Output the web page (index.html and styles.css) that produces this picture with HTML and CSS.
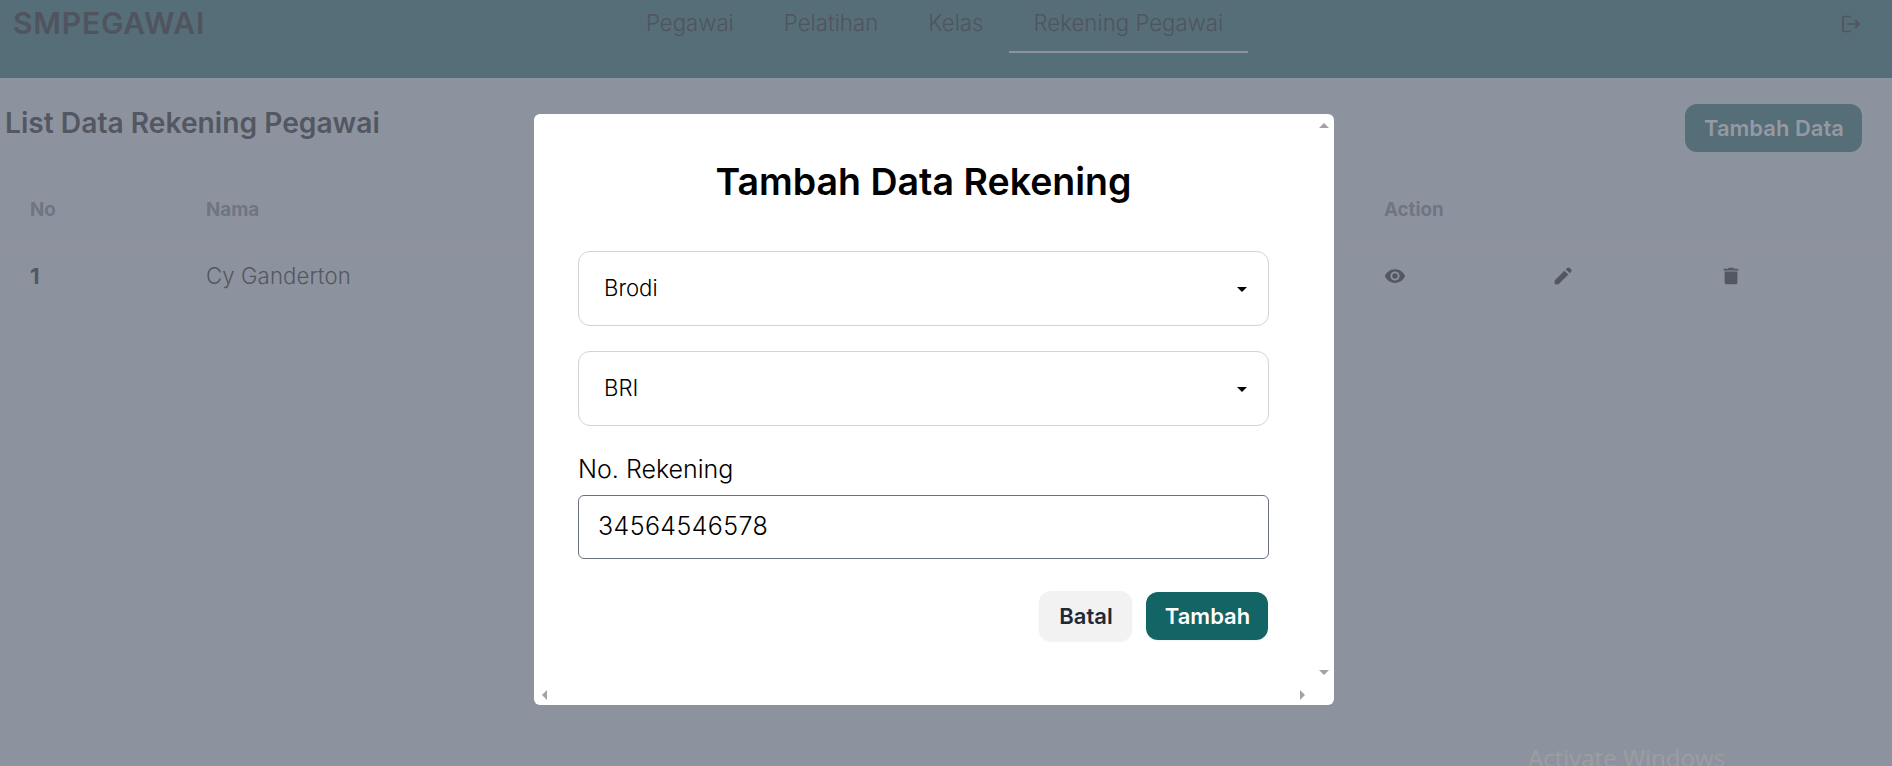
FILE: index.html
```html
<!DOCTYPE html>
<html lang="id">
<head>
<meta charset="utf-8">
<title>SMPEGAWAI</title>
<link rel="stylesheet" href="styles.css">
</head>
<body>
<header class="navbar">
  <div class="brand">SMPEGAWAI</div>
  <nav class="menu">
    <a class="menu-item">Pegawai</a>
    <a class="menu-item">Pelatihan</a>
    <a class="menu-item">Kelas</a>
    <a class="menu-item active">Rekening Pegawai</a>
  </nav>
  <svg class="icon logout" viewBox="0 0 22 22" fill="none" stroke="currentColor" stroke-width="1.7"><path d="M11 3.500H4.200Q3 3.500 3 4.700V17.300Q3 18.500 4.200 18.500H11M7.500 11H19M15 6.800L19.200 11L15 15.200"/></svg>
</header>
<main class="page">
  <div class="page-head">
    <h1 class="page-title">List Data Rekening Pegawai</h1>
    <button class="btn btn-muted">Tambah Data</button>
  </div>
  <div class="table">
    <div class="row row-head"><span>No</span><span>Nama</span><span>Action</span></div>
    <div class="row row-body">
      <span class="num">1</span><span class="name">Cy Ganderton</span>
      <span class="actions">
        <svg class="icon" viewBox="0 0 24 24" fill="currentColor"><path d="M12 9a3 3 0 0 0-3 3 3 3 0 0 0 3 3 3 3 0 0 0 3-3 3 3 0 0 0-3-3m0 8a5 5 0 0 1-5-5 5 5 0 0 1 5-5 5 5 0 0 1 5 5 5 5 0 0 1-5 5m0-12.500C7 4.500 2.730 7.610 1 12c1.730 4.390 6 7.500 11 7.500s9.270-3.110 11-7.500c-1.730-4.390-6-7.500-11-7.500Z"/></svg>
        <svg class="icon" viewBox="0 0 24 24" fill="currentColor"><path d="m19.300 8.925-4.250-4.200 1.400-1.400q.575-.575 1.413-.575.837 0 1.412.575l1.400 1.400q.575.575.6 1.388.025.812-.55 1.387ZM17.850 10.400 7.250 21H3v-4.250l10.600-10.600Z"/></svg>
        <svg class="icon" viewBox="0 0 24 24" fill="currentColor"><path d="M7 21q-.825 0-1.412-.587Q5 19.825 5 19V7h14v12q0 .825-.587 1.413Q17.825 21 17 21ZM4 6V4h5V3h6v1h5v2Z"/></svg>
      </span>
    </div>
  </div>
</main>
<div class="watermark">Activate Windows</div>
<section class="modal">
  <div class="modal-content">
    <h2 class="modal-title">Tambah Data Rekening</h2>
    <div class="select">Brodi<span class="caret"></span></div>
    <div class="select">BRI<span class="caret"></span></div>
    <label class="label" for="rek">No. Rekening</label>
    <input class="input" id="rek" value="34564546578">
    <div class="buttons">
      <button class="btn btn-light">Batal</button>
      <button class="btn btn-primary">Tambah</button>
    </div>
  </div>
  <div class="scroll-y"><i class="arrow up"></i><i class="arrow down"></i></div>
  <div class="scroll-x"><i class="arrow left"></i><i class="arrow right"></i></div>
</section>
</body>
</html>
```
FILE: styles.css
```css
* { box-sizing: border-box; }
body {
  margin: 0;
  height: 766px;
  overflow: hidden;
  position: relative;
  background: #8d939e;
  color: #525761;
  font-family: Inter, "Liberation Sans", sans-serif;
  font-size: 22.15px;
}
h1, h2 { margin: 0; }
.icon { display: block; width: 22px; height: 22px; }

.navbar {
  height: 78px;
  background: #566e78;
  display: grid;
  grid-template-columns: 621px 1fr auto;
  align-items: start;
  padding: 0 30px 0 0;
  color: #50545f;
}
.brand { font-size: 30px; font-weight: 600; line-height: 36px; letter-spacing: 0.8px; padding: 5px 0 0 13px; }
.menu { display: flex; }
.menu-item { padding: 7px 25px 0; height: 53px; line-height: 32px; font-weight: 300; letter-spacing: 0.05px; }
.menu-item.active { border-bottom: 2px solid #8d939e; }
.logout { margin-top: 13px; }

.page-head {
  display: flex;
  justify-content: space-between;
  padding: 26px 30px 0 5px;
}
.page-title { font-size: 28.2px; font-weight: 600; line-height: 39px; }

.btn {
  height: 48px;
  border: 0;
  border-radius: 12px;
  padding: 0 0 1px 1px;
  font-family: inherit;
  font-size: 22px;
  font-weight: 600;
}
.btn-muted { width: 177px; background: #566e78; color: #9499a4; }

.row {
  display: grid;
  grid-template-columns: 176px 1178px 1fr;
  align-items: center;
  padding: 0 30px;
}
.row-head {
  margin-top: 24px;
  height: 67px;
  border-bottom: 1px solid #8e919d;
  font-size: 18.75px;
  font-weight: 700;
  color: #6f7583;
}
.row-body { height: 66px; font-weight: 300; }
.name { letter-spacing: 0.12px; }
.num { font-weight: 700; }
.actions { display: grid; grid-template-columns: repeat(3, 168px); }

.watermark {
  position: absolute;
  left: 1528px;
  top: 742px;
  font: 24px/32px "Open Sans", sans-serif;
  color: #9b9ea3;
  white-space: nowrap;
}

.modal {
  position: absolute;
  left: 534px;
  top: 114px;
  width: 800px;
  height: 591px;
  display: grid;
  grid-template-columns: 1fr 21px;
  grid-template-rows: 1fr 21px;
  border-radius: 6px;
  background: #fff;
  color: #000;
}
.modal-content {
  display: flex;
  flex-direction: column;
  padding: 45px 44px 0;
}
.modal-title {
  font-size: 37.5px;
  font-weight: 600;
  line-height: 45px;
  text-align: center;
  margin-bottom: 47px;
}
.select {
  display: flex;
  align-items: center;
  justify-content: space-between;
  height: 75px;
  margin-bottom: 25px;
  padding: 0 21px 1px 25px;
  border: 1px solid #d2d3d5;
  border-radius: 12px;
  font-weight: 300;
}
.caret {
  margin-top: 3px;
  border: 5px solid transparent;
  border-top-color: #000;
  border-bottom: 0;
}
.label { font-size: 25px; font-weight: 300; line-height: 36px; }
.input {
  height: 64px;
  margin-top: 8px;
  padding: 0 19px 2px;
  border: 1px solid #6b7280;
  border-radius: 6px;
  font: 300 25px Inter, sans-serif;
  letter-spacing: 0.4px;
  color: #000;
}
.buttons {
  display: flex;
  align-items: center;
  justify-content: flex-end;
  gap: 14px;
  margin: 32px 1px 0 0;
}
.btn-light { width: 93px; height: 50px; background: #f2f2f2; color: #1f2937; box-shadow: 0 1px 2px #0000000d; }
.btn-primary { width: 122px; background: #126465; color: #fff; box-shadow: 0 1px 2px #0000000d; }

.scroll-y, .scroll-x { display: flex; align-items: center; justify-content: space-between; }
.scroll-y { flex-direction: column; padding: 9px 0; }
.scroll-x { padding: 0 8px; }
.arrow { border: 5px solid transparent; }
.up { border-bottom-color: #a3a3a3; border-top: 0; }
.down { border-top-color: #a3a3a3; border-bottom: 0; }
.left { border-right-color: #a3a3a3; border-left: 0; }
.right { border-left-color: #a3a3a3; border-right: 0; }
```
